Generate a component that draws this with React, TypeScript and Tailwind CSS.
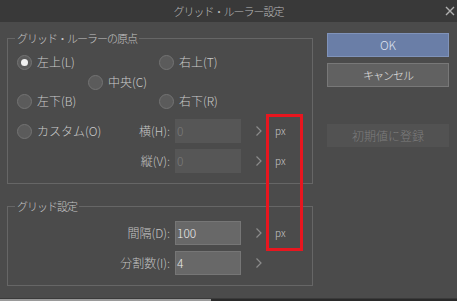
import React from "react";

const font = { fontFamily: '"Noto Sans CJK JP", "Noto Sans", sans-serif' };

function Radio({ checked = false, label }: { checked?: boolean; label: string }) {
  return (
    <div className="flex items-center h-[18px]">
      <span className="w-[15px] h-[15px] rounded-full border border-[#737373] bg-[#5b5b5b] flex items-center justify-center shrink-0">
        {checked && <span className="w-[7px] h-[7px] rounded-full bg-[#f2f2f2]" />}
      </span>
      <span className="ml-[5px] text-[12px] leading-[14px] font-light text-[#cacaca]">{label}</span>
    </div>
  );
}

function Field({
  label,
  value,
  disabled = false,
  unit = true,
  lead,
}: {
  label: string;
  value: string;
  disabled?: boolean;
  unit?: boolean;
  lead?: React.ReactNode;
}) {
  return (
    <div className="flex items-center h-[24px]">
      <div className="w-[162px] flex items-center justify-between pl-[9px]">
        <div>{lead}</div>
        <span className="text-[12px] leading-[14px] font-light text-[#c4c4c4]">{label}</span>
      </div>
      <div
        className={
          disabled
            ? "ml-[5px] w-[66px] h-[24px] bg-[#565656] text-[#7c7c7c] text-[12px] font-light leading-[24px] pl-[2px]"
            : "ml-[5px] w-[66px] h-[24px] bg-[#686868] border border-[#767676] text-[#ececec] text-[12px] font-light leading-[22px] pl-[1px]"
        }
      >
        {value}
      </div>
      <svg width="8" height="12" viewBox="0 0 8 12" className="ml-[14px]">
        <path d="M1.5 1.5 L6 6 L1.5 10.5" fill="none" stroke="#8c8c8c" strokeWidth="1.2" />
      </svg>
      {unit && <span className="ml-[12px] text-[10px] leading-[14px] font-light text-[#c8c8c8]">px</span>}
    </div>
  );
}

export default function App() {
  return (
    <div className="relative w-[457px] h-[301px] flex flex-col bg-[#4b4b4b] overflow-hidden" style={font}>
      {/* title bar */}
      <div className="relative h-[22px] bg-[#393939] flex items-center justify-center shrink-0">
        <span className="text-[11px] tracking-[-1px] font-light text-[#b8b8b8]">グリッド・ルーラー設定</span>
        <svg width="10" height="10" viewBox="0 0 10 10" className="absolute right-[2px] top-[6px]">
          <path d="M1 1 L9 9 M9 1 L1 9" stroke="#b0b0b0" strokeWidth="1.4" />
        </svg>
      </div>

      <div className="flex-1 flex pt-[9px] pl-[7px]">
        {/* left column */}
        <div className="w-[306px]">
          <fieldset className="border border-[#666] pb-[10px]">
            <legend className="ml-[7px] px-[2px] text-[11px] leading-[14px] tracking-[-1px] font-light text-[#c4c4c4]">
              グリッド・ルーラーの原点
            </legend>
            <div className="pl-[9px] mt-[8px] flex">
              <div className="w-[142px]">
                <Radio checked label="左上(L)" />
              </div>
              <Radio label="右上(T)" />
            </div>
            <div className="pl-[80px] mt-[2px]">
              <Radio label="中央(C)" />
            </div>
            <div className="pl-[9px] mt-[1px] flex">
              <div className="w-[142px]">
                <Radio label="左下(B)" />
              </div>
              <Radio label="右下(R)" />
            </div>
            <div className="mt-[9px]">
              <Field label="横(H):" value="0" disabled lead={<Radio label="カスタム(O)" />} />
            </div>
            <div className="mt-[6px]">
              <Field label="縦(V):" value="0" disabled />
            </div>
          </fieldset>

          <fieldset className="mt-[15px] border border-[#666] pb-[10px]">
            <legend className="ml-[7px] px-[2px] text-[11px] leading-[14px] tracking-[-1px] font-light text-[#c4c4c4]">
              グリッド設定
            </legend>
            <div className="mt-[8px]">
              <Field label="間隔(D):" value="100" />
            </div>
            <div className="mt-[6px]">
              <Field label="分割数(I):" value="4" unit={false} />
            </div>
          </fieldset>
        </div>

        {/* right column */}
        <div className="ml-[14px] w-[122px] pt-[2px] flex flex-col">
          <button className="h-[24px] bg-[#6a7ea7] border border-[#8093ba] text-[12px] font-light text-[#dde2ee]">OK</button>
          <button className="mt-[6px] h-[24px] bg-[#616161] border border-[#787878] text-[11px] tracking-[-1px] font-light text-[#e2e2e2]">
            キャンセル
          </button>
          <button className="mt-[37px] h-[23px] bg-[#525252] text-[12px] font-light text-[#7e7e7e]">初期値に登録</button>
        </div>
      </div>

      {/* bottom edge */}
      <div className="h-[1px] bg-[#3a3a3a] shrink-0" />
      <div className="h-[2px] flex shrink-0">
        <div className="w-[211px] bg-[#9a9a9a]" />
        <div className="flex-1 bg-[#2a2a2a]" />
      </div>

      {/* red annotation box */}
      <div className="absolute left-[266px] top-[114px] w-[37px] h-[137px] border-[3px] border-[#e8161f]" />
    </div>
  );
}
